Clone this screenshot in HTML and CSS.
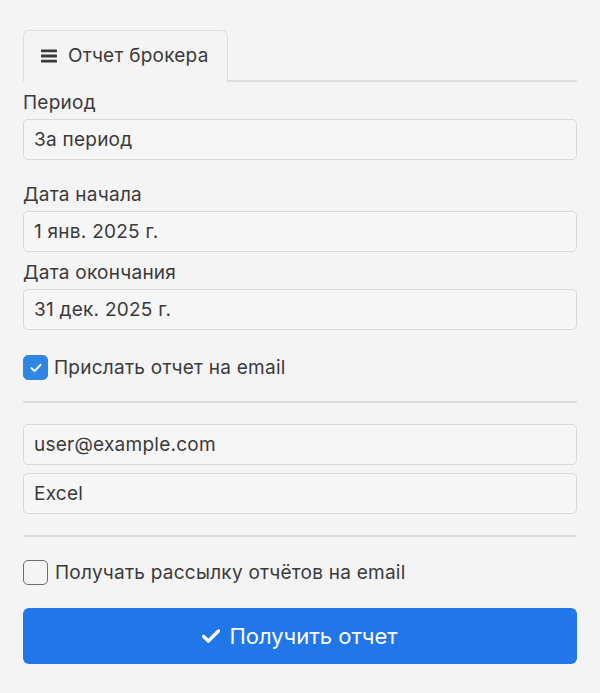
FILE: index.html
```html
<!DOCTYPE html>
<html lang="ru">
<head>
<meta charset="utf-8">
<title>Отчет брокера</title>
<link rel="stylesheet" href="styles.css">
</head>
<body>
<main class="page">
  <nav class="tabs">
    <div class="tab">
      <svg class="tab-icon" viewBox="0 0 16 14" width="16" height="14" aria-hidden="true">
        <rect x="0" y="0.4" width="16" height="2.8" rx="0.6"/>
        <rect x="0" y="5.6" width="16" height="2.8" rx="0.6"/>
        <rect x="0" y="10.8" width="16" height="2.8" rx="0.6"/>
      </svg>
      <span>Отчет брокера</span>
    </div>
  </nav>

  <form class="form">
    <div class="group group-period">
      <label class="label">Период</label>
      <div class="field">За период</div>
    </div>

    <div class="group group-start">
      <label class="label">Дата начала</label>
      <div class="field">1 янв. 2025 г.</div>
    </div>

    <div class="group group-end">
      <label class="label">Дата окончания</label>
      <div class="field">31 дек. 2025 г.</div>
    </div>

    <label class="check">
      <span class="box box-on">
        <svg viewBox="0 0 12 10" width="12" height="10" aria-hidden="true">
          <path d="M1.5 5.2 L4.6 8.1 L10.5 1.9" fill="none" stroke="#fff" stroke-width="2" stroke-linecap="round" stroke-linejoin="round"/>
        </svg>
      </span>
      <span>Прислать отчет на email</span>
    </label>

    <hr class="rule">

    <div class="stack">
      <div class="field">user@example.com</div>
      <div class="field">Excel</div>
    </div>

    <hr class="rule">

    <label class="check check-sub">
      <span class="box"></span>
      <span>Получать рассылку отчётов на email</span>
    </label>

    <button type="button" class="submit">
      <svg viewBox="0 0 18 14" width="18" height="14" aria-hidden="true">
        <path d="M1.6 7.4 L6.4 12 L16.4 2" fill="none" stroke="#fff" stroke-width="3.4" stroke-linecap="round" stroke-linejoin="round"/>
      </svg>
      <span>Получить отчет</span>
    </button>
  </form>
</main>
</body>
</html>
```

FILE: styles.css
```css
* {
  box-sizing: border-box;
}

html, body {
  margin: 0;
  background: #f4f4f4;
}

body {
  font-family: Inter, "Noto Sans", "Liberation Sans", sans-serif;
  font-size: 19px;
  letter-spacing: 0.25px;
  color: #3a3a3a;
}

.page {
  padding: 30px 23px 0;
}

/* tab strip */
.tabs {
  display: flex;
  border-bottom: 2px solid #dedede;
  height: 52px;
}

.tab {
  display: flex;
  align-items: center;
  gap: 11px;
  height: 52px;
  padding: 0 18px 2px 17px;
  white-space: nowrap;
  border: 1px solid #dedede;
  border-bottom: none;
  border-radius: 6px 6px 0 0;
  background: #f4f4f4;
  margin-bottom: -2px;
  color: #3a3a3a;
}

.tab-icon {
  fill: #3a3a3a;
  flex: none;
}

/* form */
.form {
  display: flex;
  flex-direction: column;
}

.group {
  display: flex;
  flex-direction: column;
  gap: 4px;
}

.group-period {
  margin-top: 9px;
  margin-bottom: 23px;
}

.group-start {
  margin-bottom: 9px;
}

.group-end {
  margin-bottom: 25px;
}

.label {
  line-height: 24px;
}

.field {
  height: 41px;
  padding: 0 10px;
  display: flex;
  align-items: center;
  background: #f6f6f6;
  border: 1px solid #d9d9d9;
  border-radius: 5px;
}

.check {
  display: flex;
  align-items: center;
  gap: 6px;
  height: 25px;
}

.check-sub {
  gap: 7px;
  margin-top: 23px;
}

.box {
  width: 25px;
  height: 25px;
  flex: none;
  border-radius: 5px;
  border: 1.5px solid #6d6d6d;
  display: flex;
  align-items: center;
  justify-content: center;
}

.box-on {
  background: #2f87e4;
  border-color: #2f87e4;
}

.rule {
  margin: 21px 0 0;
  border: none;
  border-top: 2px solid #dedede;
  height: 0;
}

.stack {
  display: flex;
  flex-direction: column;
  gap: 8px;
  margin-top: 21px;
}

.stack + .rule {
  margin-top: 21px;
}

.submit {
  margin-top: 23px;
  height: 56px;
  border: none;
  border-radius: 6px;
  background: #2176ea;
  color: #fff;
  font-family: inherit;
  font-size: 22px;
  letter-spacing: 0;
  display: flex;
  align-items: center;
  justify-content: center;
  gap: 9px;
  padding: 0;
}
```
